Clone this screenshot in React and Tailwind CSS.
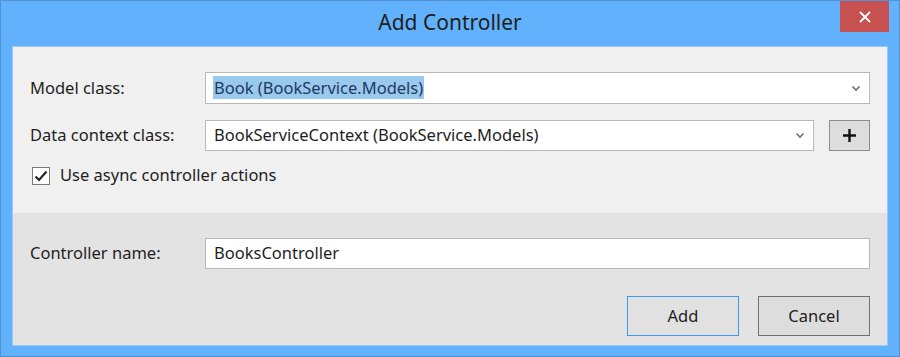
import React, { useState } from "react";

const font = { fontFamily: '"Segoe UI", "Noto Sans", "Open Sans", sans-serif' };

function Chevron() {
  return (
    <svg width="10" height="7" viewBox="0 0 10 7" className="shrink-0">
      <path d="M1.5 1.5 L5 5 L8.5 1.5" fill="none" stroke="#6d6d6d" strokeWidth="1.6" />
    </svg>
  );
}

function App() {
  const [useAsync, setUseAsync] = useState(true);

  return (
    <div
      className="w-[900px] h-[357px] bg-[#62b1fc] border border-[#4f93d6] flex flex-col text-[#1e1e1e]"
      style={font}
    >
      {/* title bar */}
      <div className="relative h-[45px] shrink-0 flex items-center justify-center">
        <span className="text-[21px] text-[#1e1e1e] leading-none -mt-[2px]">Add Controller</span>
        <button className="absolute right-[10px] top-0 w-[49px] h-[31px] bg-[#c75050] flex items-center justify-center">
          <svg width="12" height="12" viewBox="0 0 12 12">
            <path d="M1 1 L11 11 M11 1 L1 11" stroke="#fff" strokeWidth="1.8" />
          </svg>
        </button>
      </div>

      {/* content */}
      <div className="mx-[11px] mb-[10px] flex-1 flex flex-col border border-[#9cc8f0]">
        <div className="bg-[#f0f0f0] h-[166px] shrink-0 pl-[17px] pr-[17px] pt-[25px]">
          <div className="flex items-center h-[32px]">
            <label className="w-[175px] text-[16.5px]">Model class:</label>
            <div className="flex-1 h-[32px] bg-white border border-[#b8b8b8] flex items-center pl-[7px] pr-[8px]">
              <span className="flex-1 text-[16.5px]">
                <span className="bg-[#99c9ef] text-[#1e3a5c] px-[1px]">Book (BookService.Models)</span>
              </span>
              <Chevron />
            </div>
          </div>
          <div className="flex items-center h-[31px] mt-[16px]">
            <label className="w-[175px] text-[16.5px]">Data context class:</label>
            <div className="w-[609px] h-[31px] bg-white border border-[#b8b8b8] flex items-center pl-[8px] pr-[8px]">
              <span className="flex-1 text-[16.5px]">BookServiceContext (BookService.Models)</span>
              <Chevron />
            </div>
            <button className="ml-auto w-[41px] h-[31px] bg-[#dddddd] border border-[#8d8d8d] flex items-center justify-center">
              <svg width="15" height="15" viewBox="0 0 15 15">
                <path d="M7.5 1 V14 M1 7.5 H14" stroke="#111" strokeWidth="2.4" />
              </svg>
            </button>
          </div>
          <div className="flex items-center mt-[15px] h-[19px]">
            <button
              onClick={() => setUseAsync(!useAsync)}
              className="ml-[2px] w-[18px] h-[18px] bg-white border border-[#7a7a7a] flex items-center justify-center"
            >
              {useAsync && (
                <svg width="14" height="12" viewBox="0 0 14 12">
                  <path d="M1.5 6.5 L5 10 L12.5 1.5" fill="none" stroke="#222" strokeWidth="2.2" />
                </svg>
              )}
            </button>
            <span className="ml-[10px] text-[16.5px]">Use async controller actions</span>
          </div>
        </div>

        <div className="bg-[#e3e3e3] flex-1 pl-[17px] pr-[17px] pt-[25px]">
          <div className="flex items-center h-[31px]">
            <label className="w-[175px] text-[16.5px]">Controller name:</label>
            <div className="flex-1 h-[31px] bg-white border border-[#b8b8b8] flex items-center pl-[8px]">
              <span className="text-[16.5px]">BooksController</span>
            </div>
          </div>
          <div className="flex justify-end gap-[19px] mt-[27px]">
            <button className="w-[112px] h-[40px] bg-[#e1e1e1] border border-[#3c9bf0] text-[16.5px]">Add</button>
            <button className="w-[112px] h-[40px] bg-[#dddddd] border border-[#707070] text-[16.5px]">Cancel</button>
          </div>
        </div>
      </div>
    </div>
  );
}

export default App;
